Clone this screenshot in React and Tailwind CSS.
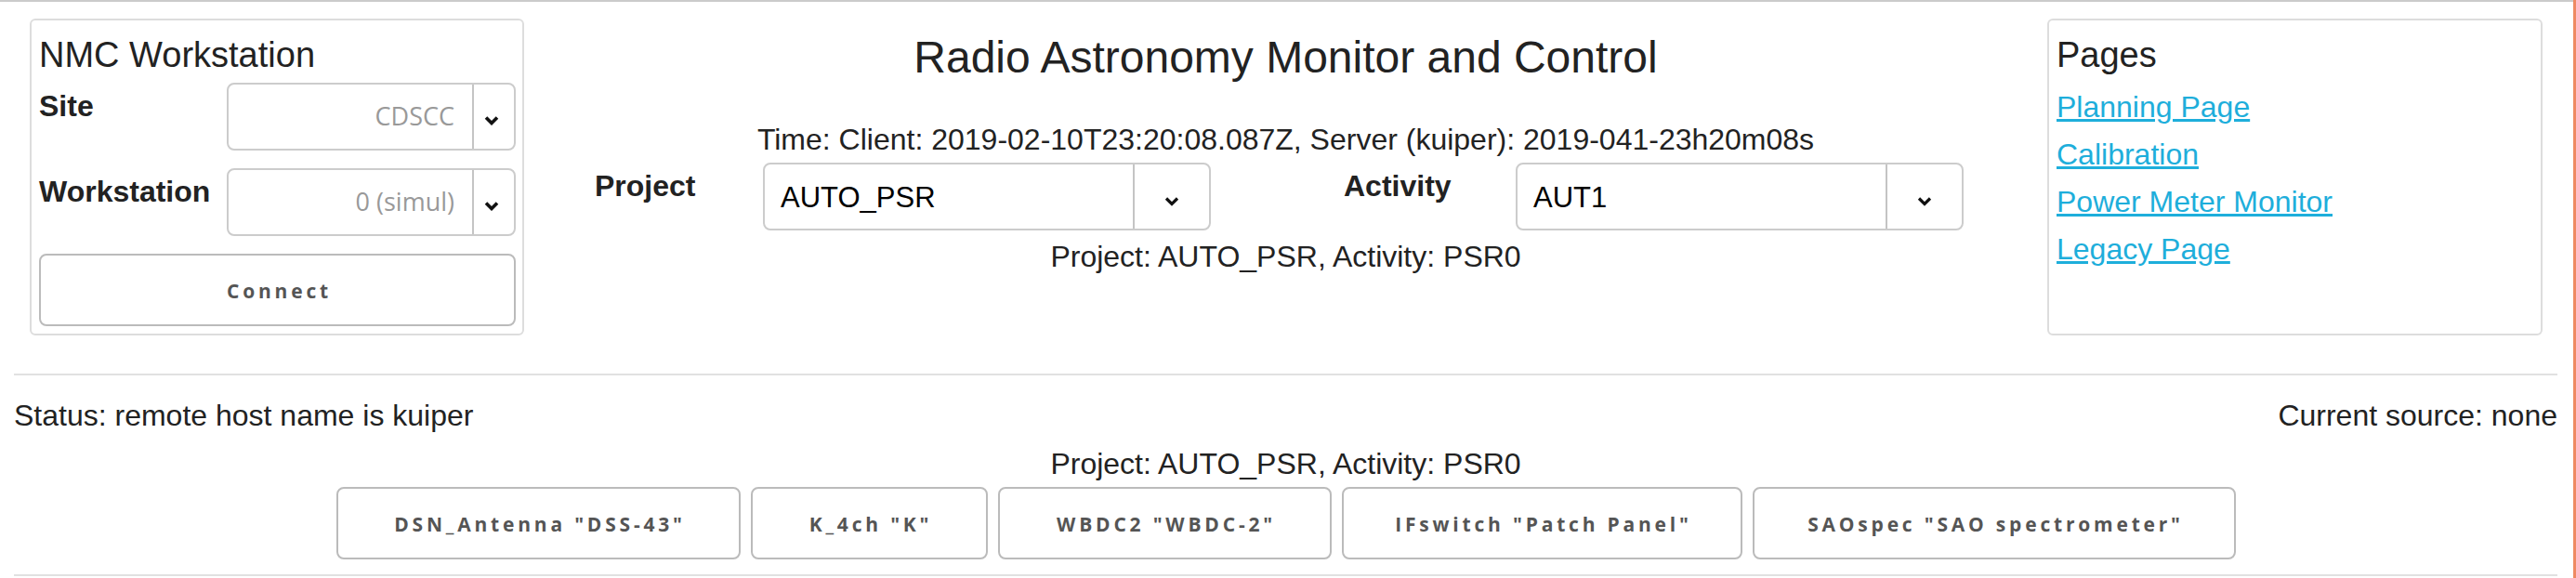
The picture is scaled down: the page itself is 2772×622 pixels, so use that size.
import React from "react";

const Chevron = ({ w = 3 }) => (
  <svg width="16" height="11" viewBox="0 0 16 11">
    <path d="M2 2.5 L8 8.5 L14 2.5" fill="none" stroke="#111" strokeWidth={w} />
  </svg>
);

function SmallSelect({ value }) {
  return (
    <div className="flex h-[73px] w-[311px] rounded-[8px] border-2 border-[#cccccc] bg-white">
      <div className="flex flex-1 items-center justify-end pr-[19px] font-['Open_Sans',sans-serif] text-[27px] text-[#999999]">
        {value}
      </div>
      <div className="flex w-[45px] items-center justify-center border-l-2 border-[#c4c4c4] pt-[8px] pr-[6px]">
        <Chevron w={3.6} />
      </div>
    </div>
  );
}

function BigSelect({ value }) {
  return (
    <div className="flex h-[73px] w-[482px] rounded-[8px] border-2 border-[#cccccc] bg-white">
      <div className="flex flex-1 items-center pl-[17px] pt-[4px] text-[31px] text-black">{value}</div>
      <div className="flex w-[82px] items-center justify-center border-l-2 border-[#c4c4c4] pt-[9px]">
        <Chevron w={3.2} />
      </div>
    </div>
  );
}

function Btn({ children, w }) {
  return (
    <div
      className={`flex h-[78px] items-center justify-center rounded-[8px] border-2 border-[#bbbbbb] bg-white pt-[3px] pl-[4px] font-['Open_Sans',sans-serif] text-[21px] font-bold tracking-[3.8px] text-[#555555] whitespace-pre ${w}`}
    >
      {children}
    </div>
  );
}

export default function App() {
  return (
    <div className="flex h-[622px] w-[2772px] bg-white">
      <div className="h-full w-[2769px] border-t-2 border-[#cbcbcb] pl-[15px] pr-[17px] font-['Liberation_Sans',Arial,sans-serif] text-[#222222]">
        <div className="flex pt-[18px]">
          {/* NMC panel */}
          <div className="ml-[17px] h-[341px] w-[532px] rounded-[6px] border-2 border-[#dddddd] pl-[8px] pr-[7px] pt-[15px]">
            <div className="text-[38px] leading-[44px]">NMC Workstation</div>
            <div className="mt-[8px] flex items-start justify-between">
              <div className="mt-[7px] text-[32px] font-bold leading-[37px]">Site</div>
              <SmallSelect value="CDSCC" />
            </div>
            <div className="mt-[19px] flex items-start justify-between">
              <div className="mt-[7px] text-[32px] font-bold leading-[37px]">Workstation</div>
              <SmallSelect value="0 (simul)" />
            </div>
            <div className="mt-[19px] flex h-[78px] w-full items-center justify-center rounded-[8px] border-2 border-[#bbbbbb] pt-[4px] pl-[4px] font-['Open_Sans',sans-serif] text-[21px] font-bold tracking-[3.8px] text-[#555555]">
              Connect
            </div>
          </div>

          {/* Center */}
          <div className="flex flex-1 flex-col items-center pt-[14px]">
            <div className="text-[48px] leading-[56px]">Radio Astronomy Monitor and Control</div>
            <div className="mt-[42px] text-[32px] leading-[37px]">
              Time: Client: 2019-02-10T23:20:08.087Z, Server (kuiper): 2019-041-23h20m08s
            </div>
            <div className="mt-[6px] flex w-full pl-[76px]">
              <div className="w-[181px] pt-[7px] text-[32px] font-bold leading-[37px]">Project</div>
              <BigSelect value="AUTO_PSR" />
              <div className="ml-[143px] w-[185px] pt-[7px] text-[32px] font-bold leading-[37px]">Activity</div>
              <BigSelect value="AUT1" />
            </div>
            <div className="mt-[10px] text-[32px] leading-[37px]">Project: AUTO_PSR, Activity: PSR0</div>
          </div>

          {/* Pages panel */}
          <div className="mr-[16px] h-[341px] w-[533px] rounded-[6px] border-2 border-[#dddddd] pl-[8px] pt-[15px]">
            <div className="text-[38px] leading-[44px]">Pages</div>
            <div className="mt-[9px] text-[32px] leading-[51px] text-[#1eaedb]">
              <div><a className="underline" href="#">Planning Page</a></div>
              <div><a className="underline" href="#">Calibration</a></div>
              <div><a className="underline" href="#">Power Meter Monitor</a></div>
              <div><a className="underline" href="#">Legacy Page</a></div>
            </div>
          </div>
        </div>

        <div className="mt-[41px] h-[2px] bg-[#e1e1e1]" />

        <div className="mt-[25px] flex justify-between text-[32px] leading-[37px]">
          <div>Status: remote host name is kuiper</div>
          <div>Current source: none</div>
        </div>
        <div className="mt-[15px] text-center text-[32px] leading-[37px]">Project: AUTO_PSR, Activity: PSR0</div>
        <div className="mt-[6px] flex justify-center gap-[11px]">
          <Btn w="w-[435px]">DSN_Antenna "DSS-43"</Btn>
          <Btn w="w-[255px]">K_4ch "K"</Btn>
          <Btn w="w-[359px]">WBDC2 "WBDC-2"</Btn>
          <Btn w="w-[431px]">IFswitch "Patch Panel"</Btn>
          <Btn w="w-[520px]">SAOspec "SAO spectrometer"</Btn>
        </div>
        <div className="mt-[16px] h-[2px] bg-[#e1e1e1]" />
      </div>
      <div className="h-full w-[3px] bg-[#ee8a62]" />
    </div>
  );
}
